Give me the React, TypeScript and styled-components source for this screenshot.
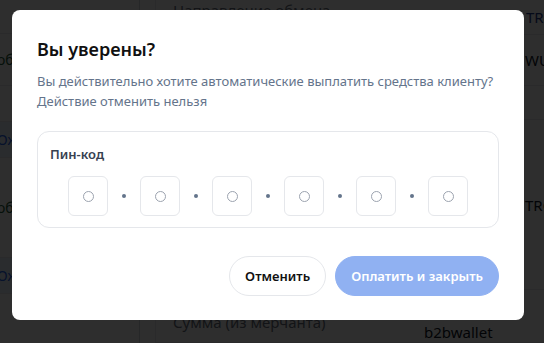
import React from "react";
import styled, { createGlobalStyle } from "styled-components";

const GlobalStyle = createGlobalStyle`
  html, body {
    margin: 0;
    padding: 0;
    width: 544px;
    height: 343px;
    overflow: hidden;
    background: #ffffff;
    font-family: "Noto Sans", "Open Sans", Arial, sans-serif;
  }
  * {
    box-sizing: border-box;
  }
`;

const Page = styled.div`
  display: grid;
  grid-template-columns: 140px 16px 1fr;
  width: 544px;
  height: 343px;
  overflow: hidden;
`;

const ListColumn = styled.div`
  display: flex;
  flex-direction: column;
  border-right: 1px solid #d1d5db;
`;

const ListRow = styled.div<{ $active?: boolean; $h: number }>`
  display: flex;
  align-items: center;
  height: ${(p) => p.$h}px;
  margin-left: -3px;
  font-size: 14px;
  color: ${(p) => (p.$active ? "#2563eb" : "#1f5d3a")};
  background: ${(p) => (p.$active ? "#eaf2ff" : "transparent")};
  border-bottom: 1px solid #e5e7eb;
  white-space: nowrap;
`;

const Spacer = styled.div`
  border-right: 1px solid #e5e7eb;
`;

const Details = styled.div`
  display: flex;
  flex-direction: column;
`;

const DetailRow = styled.div<{ $h: number; $valueAt: number }>`
  display: grid;
  grid-template-columns: ${(p) => p.$valueAt}px 1fr;
  height: ${(p) => p.$h}px;
  padding-left: 17px;
  border-bottom: 1px solid #e5e7eb;
  font-size: 15px;
  line-height: 20px;
  white-space: nowrap;
  overflow: hidden;
`;

const Label = styled.span<{ $top?: number }>`
  color: #6b7280;
  padding-top: ${(p) => p.$top ?? 0}px;
`;

const Value = styled.span<{ $link?: boolean; $low?: boolean }>`
  color: ${(p) => (p.$link ? "#1e3a8a" : "#111827")};
  align-self: ${(p) => (p.$low ? "end" : "center")};
`;

const Backdrop = styled.div`
  position: fixed;
  inset: 0;
  background: rgba(0, 0, 0, 0.82);
  display: flex;
  align-items: flex-start;
  justify-content: flex-start;
  padding: 10px 0 0 12px;
`;

const Modal = styled.div`
  width: 512px;
  background: #ffffff;
  border-radius: 8px;
  padding: 25px 25px 24px 25px;
  display: flex;
  flex-direction: column;
`;

const Title = styled.h2`
  margin: 0;
  font-size: 18px;
  line-height: 28px;
  font-weight: 600;
  color: #111111;
`;

const Text = styled.p`
  margin: 8px 0 0;
  font-size: 13px;
  line-height: 20px;
  color: #64748b;
`;

const PinBox = styled.div`
  margin-top: 20px;
  border: 1px solid #e5e7eb;
  border-radius: 12px;
  padding: 12px 12px 11px;
  display: flex;
  flex-direction: column;
  gap: 12px;
`;

const PinLabel = styled.div`
  font-size: 13px;
  line-height: 20px;
  font-weight: 600;
  color: #374151;
`;

const PinRow = styled.div`
  display: flex;
  justify-content: center;
  align-items: center;
  gap: 14px;
`;

const Cell = styled.div`
  width: 40px;
  height: 40px;
  border: 1px solid #e5e7eb;
  border-radius: 6px;
  display: flex;
  align-items: center;
  justify-content: center;
`;

const Ring = styled.span`
  width: 11px;
  height: 11px;
  border: 1.3px solid #9ca3af;
  border-radius: 50%;
`;

const Dot = styled.span`
  width: 4px;
  height: 4px;
  border-radius: 50%;
  background: #64748b;
`;

const Actions = styled.div`
  margin-top: 28px;
  display: flex;
  justify-content: flex-end;
  gap: 9px;
`;

const Button = styled.button<{ $primary?: boolean }>`
  height: 40px;
  border-radius: 20px;
  padding: 0 15px;
  font-family: inherit;
  font-size: 13px;
  font-weight: 600;
  cursor: pointer;
  border: 1px solid ${(p) => (p.$primary ? "#90b1f2" : "#e5e7eb")};
  background: ${(p) => (p.$primary ? "#90b1f2" : "#ffffff")};
  color: ${(p) => (p.$primary ? "#ffffff" : "#111111")};
`;

const pins = [0, 1, 2, 3, 4, 5];

export default function App() {
  return (
    <>
      <GlobalStyle />
      <Page>
        <ListColumn>
          <ListRow $h={34} />
          <ListRow $h={52}>обработан</ListRow>
          <ListRow $h={36} />
          <ListRow $h={36} $active>Ожидает</ListRow>
          <ListRow $h={100}>обработан</ListRow>
          <ListRow $h={36} $active>Ожидает</ListRow>
          <ListRow $h={60} />
        </ListColumn>
        <Spacer />
        <Details>
          <DetailRow $h={35} $valueAt={304}>
            <Label>Направление обмена</Label>
            <Value $link>Tether TRC20</Value>
          </DetailRow>
          <DetailRow $h={51} $valueAt={352}>
            <Label $top={15}>Кошелёк</Label>
            <Value>WUSDT</Value>
          </DetailRow>
          <DetailRow $h={34} $valueAt={352}>
            <Label $top={7}>Сеть</Label>
            <Value />
          </DetailRow>
          <DetailRow $h={170} $valueAt={352}>
            <Label $top={75}>Валюта</Label>
            <Value>TRC20</Value>
          </DetailRow>
          <DetailRow $h={53} $valueAt={251}>
            <Label $top={22}>Сумма (из мерчанта)</Label>
            <Value $low>b2bwallet</Value>
          </DetailRow>
        </Details>
      </Page>
      <Backdrop>
        <Modal>
          <Title>Вы уверены?</Title>
          <Text>
            Вы действительно хотите автоматические выплатить средства клиенту?
            <br />
            Действие отменить нельзя
          </Text>
          <PinBox>
            <PinLabel>Пин-код</PinLabel>
            <PinRow>
              {pins.map((i) => (
                <React.Fragment key={i}>
                  {i > 0 && <Dot />}
                  <Cell>
                    <Ring />
                  </Cell>
                </React.Fragment>
              ))}
            </PinRow>
          </PinBox>
          <Actions>
            <Button>Отменить</Button>
            <Button $primary>Оплатить и закрыть</Button>
          </Actions>
        </Modal>
      </Backdrop>
    </>
  );
}
